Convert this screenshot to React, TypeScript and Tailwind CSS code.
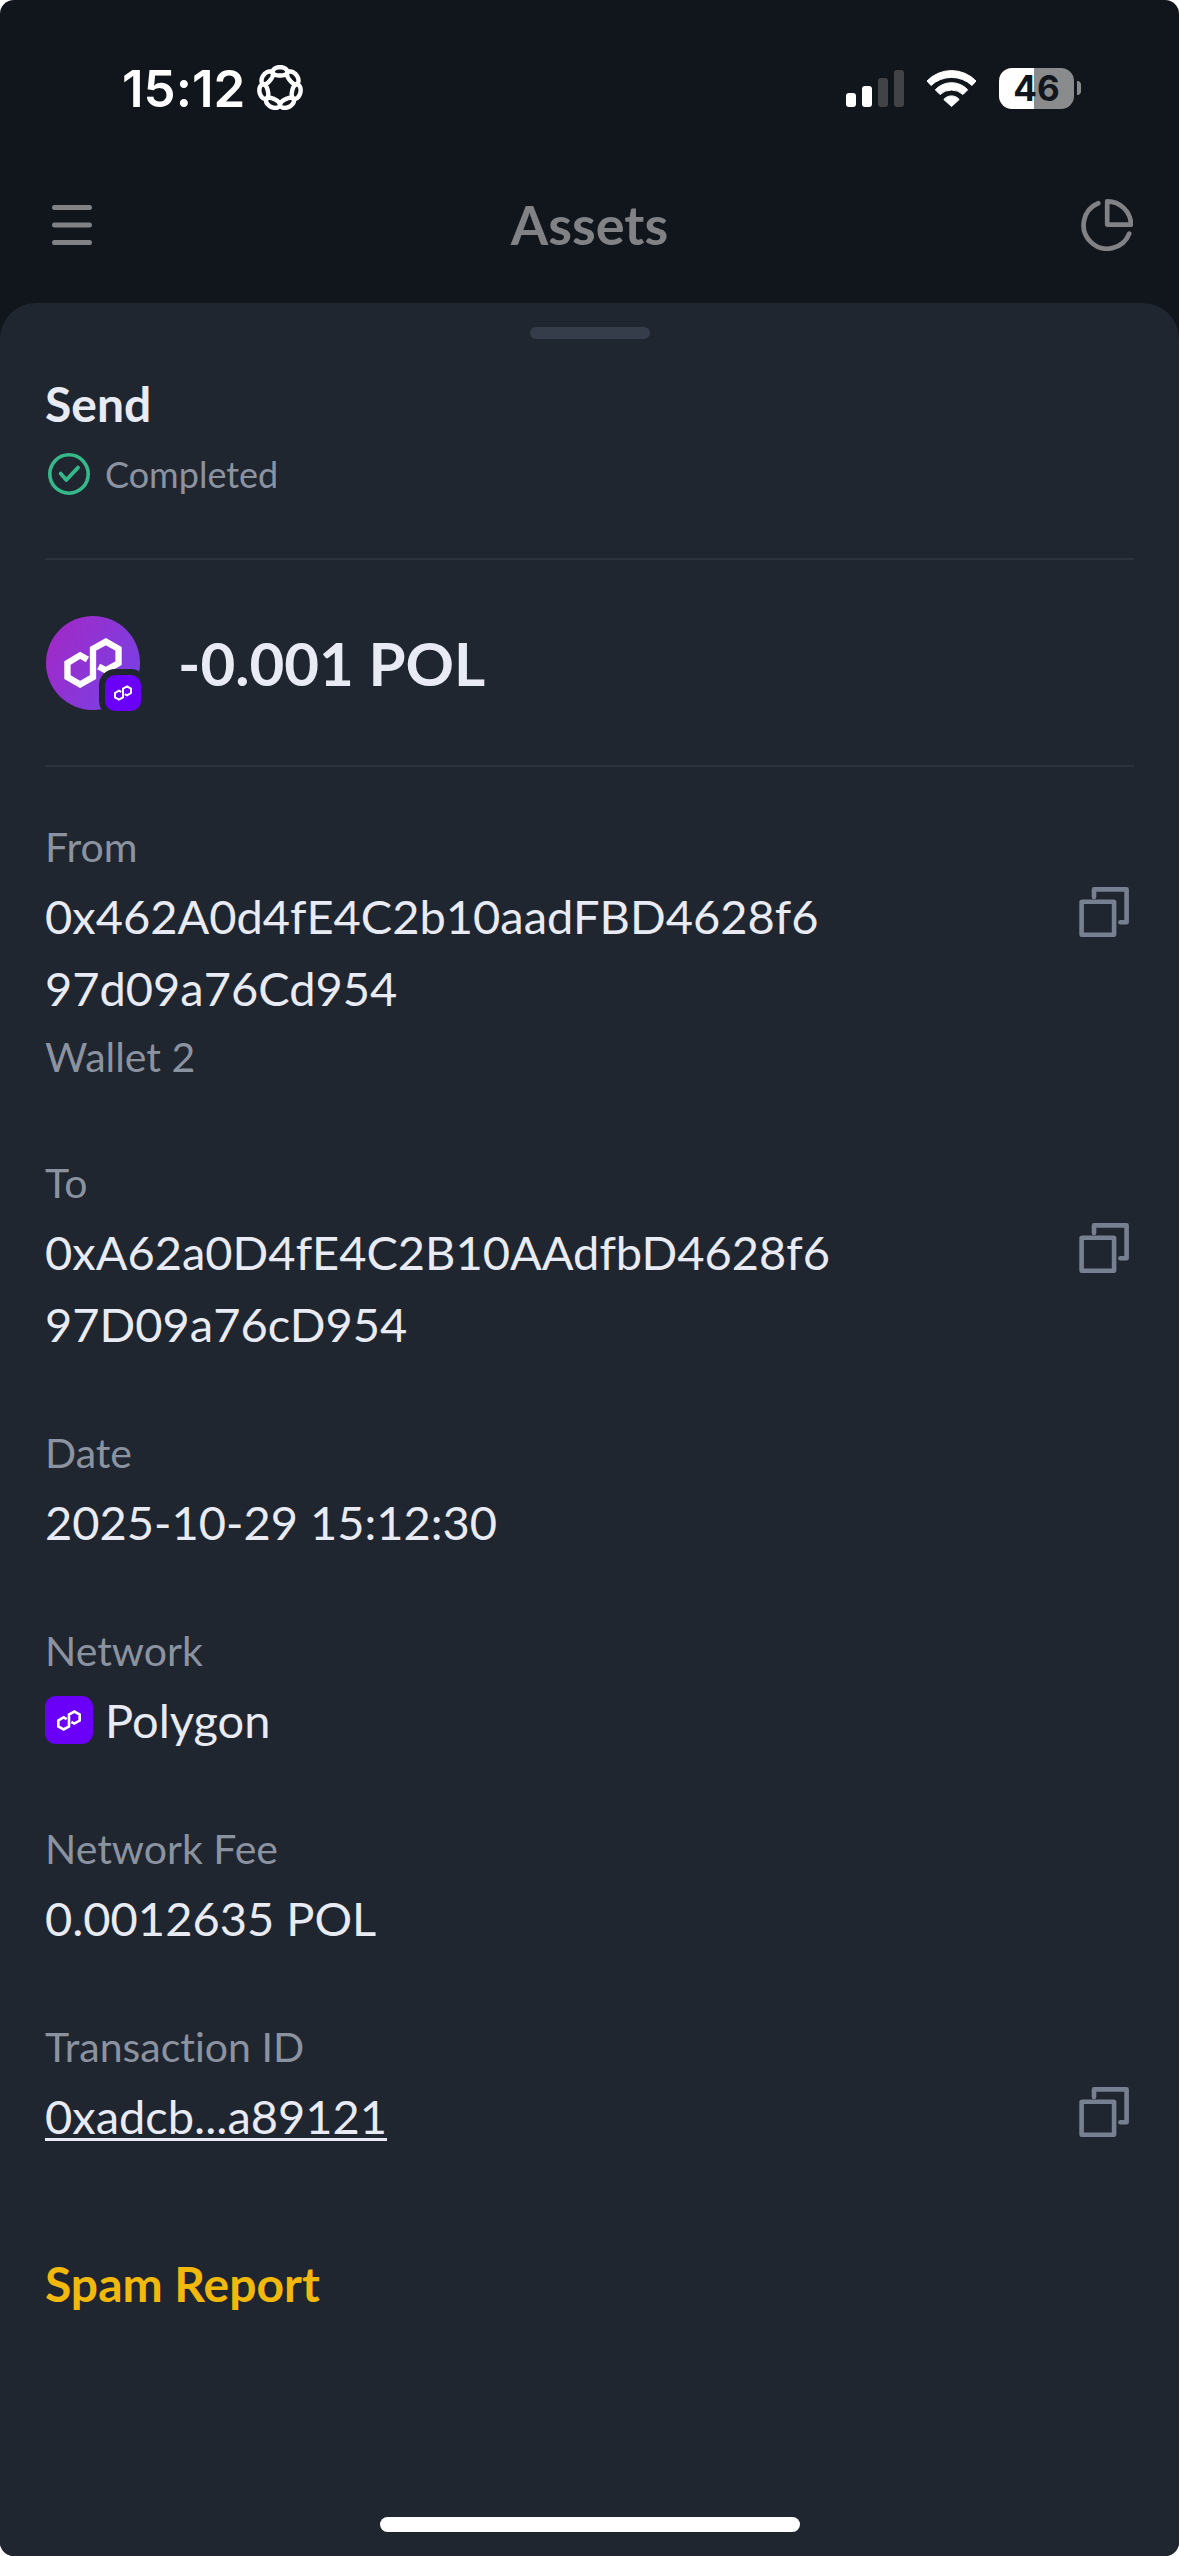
import type { ReactNode } from "react";

function loopPath() {
  const points: string[] = [];
  const steps = 280;
  for (let i = 0; i < steps; i++) {
    const t = (i / steps) * Math.PI * 4;
    const r = 16.7 + 4.2 * Math.cos(3.5 * t);
    const a = t + 0.1 * Math.sin(7 * t);
    points.push(`${(23 + r * Math.sin(a)).toFixed(2)} ${(23 - r * Math.cos(a)).toFixed(2)}`);
  }
  return `M${points.join("L")}Z`;
}

const FOCUS_LOOP = loopPath();

function FocusIcon() {
  return (
    <svg viewBox="0 0 46 46" className="size-[46px]" fill="none" stroke="white" strokeWidth="4.4" aria-hidden="true">
      <path d={FOCUS_LOOP} strokeLinejoin="round" />
    </svg>
  );
}

function SignalIcon() {
  return (
    <svg viewBox="0 0 58 37" className="h-[37px] w-[58px]" aria-hidden="true">
      <rect x="0" y="23" width="10" height="14" rx="3" fill="#fff" />
      <rect x="16" y="16" width="10" height="21" rx="3" fill="#fff" />
      <rect x="32" y="8" width="10" height="29" rx="3" fill="#414347" />
      <rect x="48" y="0" width="10" height="37" rx="3" fill="#414347" />
    </svg>
  );
}

function WifiIcon() {
  return (
    <svg viewBox="0 0 51 37" className="h-[37px] w-[51px]" fill="#fff" stroke="#fff" strokeWidth="1" strokeLinejoin="round" aria-hidden="true">
      <path d="M1 11A34 34 0 0 1 50 11L46 15.5A30 30 0 0 0 5 15.5Z" />
      <path d="M9.3 19.8A22 22 0 0 1 41.7 19.8L37 24.5A17 17 0 0 0 14 24.5Z" />
      <path d="M17.8 29.5A10 10 0 0 1 33.2 29.5L25.5 36.5Z" />
    </svg>
  );
}

function Battery() {
  return (
    <div className="flex items-center gap-[3px]" aria-label="Battery 46 percent">
      <div className="flex h-[41px] w-[75px] items-center justify-center rounded-[13px] bg-[linear-gradient(90deg,#fff_47%,#8a8b8d_47%)]">
        <span className="font-['Inter',sans-serif] text-[35px] leading-none font-bold text-[#11151c]">46</span>
      </div>
      <div className="h-3.5 w-1 rounded-r-full bg-[#8a8b8d]" />
    </div>
  );
}

function MenuIcon() {
  return (
    <svg viewBox="0 0 40 40" className="size-10" stroke="#808286" strokeWidth="5" strokeLinecap="round" aria-hidden="true">
      <path d="M2.5 2.5H37.5M2.5 20H37.5M2.5 37.5H37.5" />
    </svg>
  );
}

function PieIcon() {
  return (
    <svg viewBox="0 0 52 52" className="size-[52px]" fill="none" stroke="#808286" strokeWidth="4.7" strokeLinecap="round" strokeLinejoin="round" aria-hidden="true">
      <path d="M17.3 4.2A23.6 23.6 0 1 0 48.2 34.6" />
      <path d="M26.2 2.4V25.6H50A23.6 23.6 0 0 0 26.2 2.4Z" />
    </svg>
  );
}

function CopyIcon() {
  return (
    <svg viewBox="0 0 52 52" className="size-[52px]" fill="none" stroke="#778090" strokeWidth="4.6" strokeLinecap="round" strokeLinejoin="round" aria-hidden="true">
      <rect x="3.6" y="15.7" width="32.5" height="33" rx="0.5" />
      <path d="M16 11V3.4H48.6V36.3H42.4" />
    </svg>
  );
}

function CheckIcon() {
  return (
    <svg viewBox="0 0 48 48" className="size-12" fill="none" stroke="#35b98b" strokeLinecap="round" strokeLinejoin="round" aria-hidden="true">
      <circle cx="24" cy="24" r="19.2" strokeWidth="3.6" />
      <path d="M15.6 23.6L21.3 30L33 17.6" strokeWidth="3.8" />
    </svg>
  );
}

function PolygonMark({ className }: { className: string }) {
  return (
    <svg viewBox="18 21.5 58 50.5" className={className} fill="none" stroke="#fff" strokeWidth="6.4" aria-hidden="true">
      <path d="M41.4 43.3L34 39L21.2 46.7V61L34 68.4L47 61V32.4L60 25.2L72.8 32.4V46.9L60 54.2L52.6 50.3" />
    </svg>
  );
}

function TokenIcon() {
  return (
    <div className="relative flex size-[94px] shrink-0 items-center justify-center rounded-full bg-[linear-gradient(120deg,#a229c5_5%,#7b3fe4_85%)]">
      <PolygonMark className="h-[50px] w-[58px]" />
      <span className="absolute -right-px -bottom-px flex size-9 items-center justify-center rounded-[10px] bg-[#6a00f7] ring-6 ring-[#202630]">
        <PolygonMark className="h-4 w-[18px]" />
      </span>
    </div>
  );
}

function Field({ label, note, copyable, children }: { label: string; note?: string; copyable?: boolean; children: ReactNode }) {
  return (
    <div className="flex items-start justify-between">
      <dl>
        <dt className="text-[41px] leading-[66px] text-[#8c93a0]">{label}</dt>
        <dd className="max-w-[790px] text-[47px] leading-[72px] break-all text-[#e8ebf4]">{children}</dd>
        {note && <dd className="text-[41px] leading-[66px] text-[#8c93a0]">{note}</dd>}
      </dl>
      {copyable && (
        <button type="button" aria-label={`Copy ${label}`} className="mt-[72px] mr-1">
          <CopyIcon />
        </button>
      )}
    </div>
  );
}

export default function App() {
  return (
    <div className="min-h-screen bg-white font-['Lato','Noto_Sans',sans-serif] [font-variant-ligatures:none]">
      <div className="flex min-h-screen flex-col overflow-hidden rounded-[14px] bg-[#11151c]">
        <div className="flex h-44 items-center justify-between pr-[98px] pl-[122px]">
          <div className="flex items-center gap-3">
            <time className="font-['Inter',sans-serif] text-[51px] leading-none font-semibold text-white">15:12</time>
            <FocusIcon />
          </div>
          <div className="flex items-center gap-[22px]">
            <SignalIcon />
            <WifiIcon />
            <Battery />
          </div>
        </div>

        <header className="mb-[29px] flex h-[98px] items-center justify-between px-[46px]">
          <button type="button" aria-label="Menu" className="flex w-[52px] justify-center">
            <MenuIcon />
          </button>
          <h1 className="text-[54px] leading-none font-bold text-[#808286]">Assets</h1>
          <button type="button" aria-label="Portfolio breakdown">
            <PieIcon />
          </button>
        </header>

        <main className="flex grow flex-col rounded-t-[36px] bg-[#202630] px-[45px] pt-6 pb-6">
          <div className="mx-auto h-3 w-[120px] rounded-full bg-[#343d49]" />

          <section className="mt-[35px] border-b-2 border-[#2c333e] pb-[60px]">
            <h2 className="text-[48px] leading-[60px] font-bold text-[#e8ebf4]">Send</h2>
            <p className="mt-4 flex items-center gap-3 text-[36px] leading-[48px] text-[#8c93a0]">
              <CheckIcon />
              Completed
            </p>
          </section>

          <section className="flex h-[207px] items-center gap-[38px] border-b-2 border-[#2c333e] pl-px">
            <TokenIcon />
            <p className="text-[60px] leading-none font-bold text-[#e8ebf4]">-0.001 POL</p>
          </section>

          <section className="mt-[47px] flex flex-col gap-[60px]">
            <Field label="From" note="Wallet 2" copyable>
              0x462A0d4fE4C2b10aadFBD4628f697d09a76Cd954
            </Field>
            <Field label="To" copyable>
              0xA62a0D4fE4C2B10AAdfbD4628f697D09a76cD954
            </Field>
            <Field label="Date">2025-10-29 15:12:30</Field>
            <Field label="Network">
              <span className="flex items-center gap-3">
                <span className="flex size-12 items-center justify-center rounded-[11px] bg-[#6a00f7]">
                  <PolygonMark className="h-[21px] w-6" />
                </span>
                Polygon
              </span>
            </Field>
            <Field label="Network Fee">0.0012635 POL</Field>
            <Field label="Transaction ID" copyable>
              <a href="#transaction" className="underline decoration-3 underline-offset-4">
                0xadcb...a89121
              </a>
            </Field>
          </section>

          <button type="button" className="mt-24 self-start text-[48px] leading-[72px] font-bold text-[#f0b90b]">
            Spam Report
          </button>

          <div className="mx-auto mt-auto h-[15px] w-[420px] max-w-full rounded-full bg-white" />
        </main>
      </div>
    </div>
  );
}
